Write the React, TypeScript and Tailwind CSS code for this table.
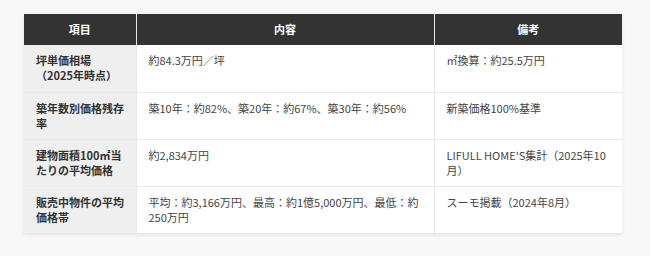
import React from "react";

const rows: [React.ReactNode, string, string][] = [
  [<>坪単価相場<br />（2025年時点）</>, "約84.3万円／坪", "㎡換算：約25.5万円"],
  ["築年数別価格残存率", "築10年：約82%、築20年：約67%、築30年：約56%", "新築価格100%基準"],
  ["建物面積100㎡当たりの平均価格", "約2,834万円", "LIFULL HOME'S集計（2025年10月）"],
  ["販売中物件の平均価格帯", "平均：約3,166万円、最高：約1億5,000万円、最低：約250万円", "スーモ掲載（2024年8月）"],
];

export default function App() {
  return (
    <div
      className="w-[650px] h-[256px] bg-[#f8f8f8] pt-[14px] pl-[24px]"
      style={{ fontFamily: '"Noto Sans CJK JP", "Noto Sans", sans-serif' }}
    >
      <table className="w-[598px] border-collapse table-fixed text-[11px] leading-[15px] shadow-[0_1px_4px_rgba(0,0,0,0.08)]">
        <colgroup>
          <col className="w-[112px]" />
          <col className="w-[298px]" />
          <col className="w-[188px]" />
        </colgroup>
        <thead>
          <tr className="bg-[#333333] text-white font-bold">
            <th className="h-[31px] px-[12px] py-[8px] text-center border-r border-[#e5e5e5]">項目</th>
            <th className="h-[31px] px-[12px] py-[8px] text-center border-r border-[#e5e5e5]">内容</th>
            <th className="h-[31px] px-[12px] py-[8px] text-center">備考</th>
          </tr>
        </thead>
        <tbody>
          {rows.map((r, i) => (
            <tr key={i} className="border-b border-[#e8e8e8]">
              <td className="h-[47px] align-top pl-[12px] pr-[6px] py-[8px] bg-[#efefef] font-bold text-[#333333] border-r border-[#e8e8e8]">
                {r[0]}
              </td>
              <td className="align-top px-[12px] py-[8px] bg-white text-[#444444] border-r border-[#e8e8e8]">
                {r[1]}
              </td>
              <td className="align-top px-[12px] py-[8px] bg-white text-[#444444]">{r[2]}</td>
            </tr>
          ))}
        </tbody>
      </table>
    </div>
  );
}
